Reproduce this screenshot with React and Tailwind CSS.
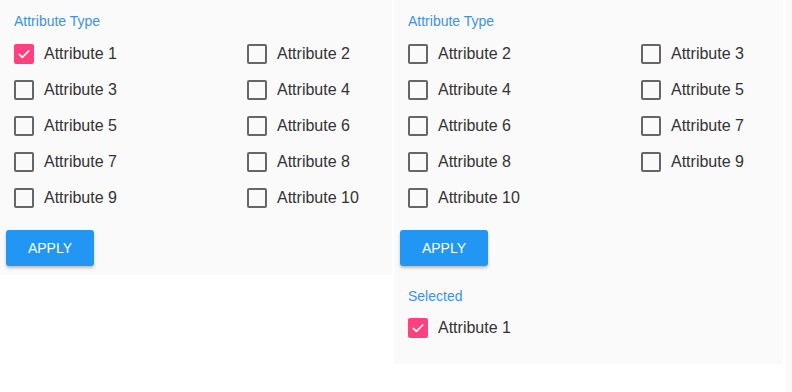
import React from 'react';

const Check = ({ checked, label }) => (
  <div className="flex items-center h-9">
    {checked ? (
      <span className="w-5 h-5 rounded-[2px] bg-[#ff4081] flex items-center justify-center shrink-0">
        <svg viewBox="0 0 24 24" className="w-4 h-4" fill="none" stroke="white" strokeWidth="2.6" strokeLinecap="round" strokeLinejoin="round">
          <path d="M5 12.5l4.5 4.5L19 7.5" />
        </svg>
      </span>
    ) : (
      <span className="w-5 h-5 rounded-[2px] border-2 border-[#666666] shrink-0" />
    )}
    <span className="ml-[10px] text-[16px] text-[#333333]">{label}</span>
  </div>
);

const Panel = ({ items, checked = [], selected, className }) => (
  <div className={`bg-[#fafafa] ${className}`}>
    <div className="px-[14px] pt-[12px] text-[14px] leading-[18px] text-[#3d92e3]">Attribute Type</div>
    <div className="grid grid-cols-[233px_1fr] px-[14px] pt-[6px]">
      {items.map((n) => (
        <Check key={n} label={`Attribute ${n}`} checked={checked.includes(n)} />
      ))}
    </div>
    <div className="px-[6px] pt-[14px]">
      <button className="w-[88px] h-9 rounded-[3px] bg-[#2196f3] text-white text-[14px] shadow-[0_2px_3px_rgba(0,0,0,0.25)]">
        APPLY
      </button>
    </div>
    {selected && (
      <div className="px-[14px] pt-[21px]">
        <div className="text-[14px] leading-[18px] text-[#3d92e3]">Selected</div>
        <div className="pt-[5px]">
          {selected.map((n) => (
            <Check key={n} label={`Attribute ${n}`} checked />
          ))}
        </div>
      </div>
    )}
  </div>
);

export default function App() {
  return (
    <div className="w-[792px] h-[392px] bg-white flex items-start font-['Liberation_Sans',Arial,sans-serif]">
      <Panel className="w-[392px] h-[275px]" items={[1, 2, 3, 4, 5, 6, 7, 8, 9, 10]} checked={[1]} />
      <Panel className="ml-[2px] w-[389px] h-[364px]" items={[2, 3, 4, 5, 6, 7, 8, 9, 10]} selected={[1]} />
      <div className="ml-[3px] w-[6px] h-[392px] bg-[#fafafa]" />
    </div>
  );
}
